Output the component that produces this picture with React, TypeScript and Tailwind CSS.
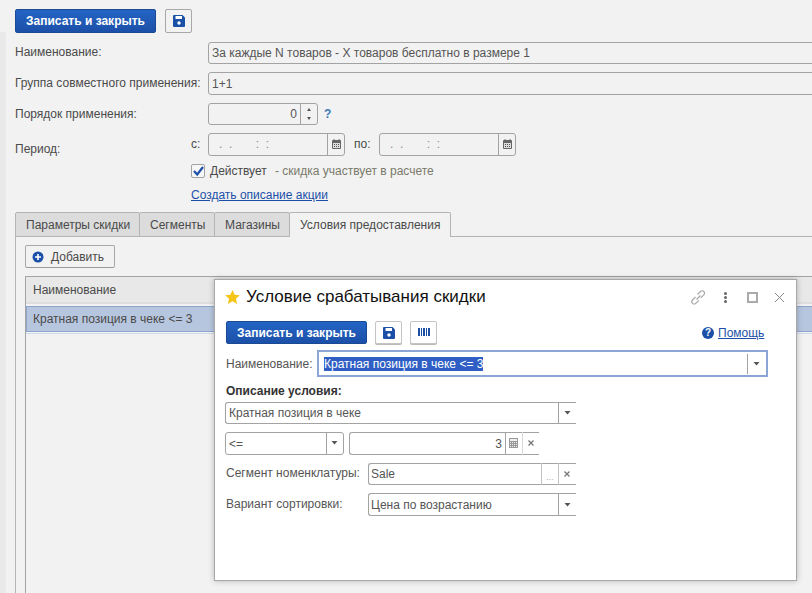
import React from "react";

const Save = ({ x, y }: { x: number; y: number }) => (
  <svg className="absolute" style={{ left: x, top: y }} width="12" height="12" viewBox="0 0 12 12">
    <path d="M1 0h8.5L12 2.5V11a1 1 0 0 1-1 1H1a1 1 0 0 1-1-1V1a1 1 0 0 1 1-1z" fill="#1c50a8" />
    <rect x="2.5" y="1" width="6.5" height="3" fill="#ffffff" />
    <circle cx="6" cy="8" r="1.7" fill="#ffffff" />
  </svg>
);

const Arrow = ({ x, y, c = "#555" }: { x: number; y: number; c?: string }) => (
  <svg className="absolute" style={{ left: x, top: y }} width="7" height="4" viewBox="0 0 7 4">
    <path d="M0.5 0h6L3.5 3.5z" fill={c} />
  </svg>
);

const Cal = ({ x, y }: { x: number; y: number }) => (
  <svg className="absolute" style={{ left: x, top: y }} width="9" height="10" viewBox="0 0 9 10">
    <rect x="0" y="1" width="9" height="9" rx="1" fill="#666" />
    <rect x="1.5" y="0" width="1" height="2" fill="#666" />
    <rect x="6.5" y="0" width="1" height="2" fill="#666" />
    <rect x="1" y="4" width="7" height="5" fill="#ddd" />
    <path d="M2 5h1v1H2zM4 5h1v1H4zM6 5h1v1H6zM2 7h1v1H2zM4 7h1v1H4zM6 7h1v1H6z" fill="#555" />
  </svg>
);

const X = ({ x, y, c = "#777" }: { x: number; y: number; c?: string }) => (
  <svg className="absolute" style={{ left: x, top: y }} width="6" height="6" viewBox="0 0 6 6">
    <path d="M0.5 0.5l5 5M5.5 0.5l-5 5" stroke={c} strokeWidth="1.3" />
  </svg>
);

export default function App() {
  return (
    <div className="relative w-[812px] h-[593px] overflow-hidden bg-[#f2f2f2] text-[12px] leading-[14px] text-[#4a4a4a] [font-family:Liberation_Sans,sans-serif]">
      <div className="absolute left-0 top-[32px] w-[6px] h-[561px] bg-[#e9e9e9]" />

      {/* top toolbar */}
      <div className="absolute left-[15px] top-[9px] w-[141px] h-[24px] rounded-[2px] border border-[#1a4a94] bg-gradient-to-b from-[#2464c4] to-[#1c50a8] text-white font-bold flex items-center justify-center">Записать и закрыть</div>
      <div className="absolute left-[165px] top-[9px] w-[27px] h-[24px] rounded-[2px] border border-[#a8a8a8] bg-[#f2f2f2]" />
      <Save x={173} y={15} />

      {/* form */}
      <div className="absolute left-[15px] top-[45px]">Наименование:</div>
      <div className="absolute left-[208px] top-[42px] w-[620px] h-[22px] rounded-[3px] border border-[#a3a3a3] pl-[3px] pt-[3px] text-[#555]">За каждые N товаров - X товаров бесплатно в размере 1</div>
      <div className="absolute left-[15px] top-[76px]">Группа совместного применения:</div>
      <div className="absolute left-[208px] top-[72px] w-[620px] h-[23px] rounded-[3px] border border-[#a3a3a3] pl-[3px] pt-[4px] text-[#555]">1+1</div>
      <div className="absolute left-[15px] top-[107px]">Порядок применения:</div>
      <div className="absolute left-[208px] top-[103px] w-[110px] h-[22px] rounded-[3px] border border-[#a3a3a3]">
        <div className="absolute right-[20px] top-[3px] text-[#555]">0</div>
        <div className="absolute left-[91px] top-0 w-px h-[20px] bg-[#a3a3a3]" />
      </div>
      <div className="absolute left-[307px] top-[108px] w-0 h-0 border-x-[2px] border-x-transparent border-b-[3px] border-b-[#555]" />
      <div className="absolute left-[307px] top-[117px] w-0 h-0 border-x-[2px] border-x-transparent border-t-[3px] border-t-[#555]" />
      <div className="absolute left-[324px] top-[107px] font-bold text-[#3a7ab8]">?</div>

      <div className="absolute left-[15px] top-[142px]">Период:</div>
      <div className="absolute left-[191px] top-[137px]">с:</div>
      <div className="absolute left-[208px] top-[133px] w-[137px] h-[23px] rounded-[3px] border border-[#a3a3a3]">
        <div className="absolute left-[10px] top-[3px] text-[#8a8a8a] whitespace-pre">{".  .       :  :"}</div>
        <div className="absolute left-[118px] top-0 w-px h-[21px] bg-[#a3a3a3]" />
      </div>
      <Cal x={332} y={139} />
      <div className="absolute left-[354px] top-[137px]">по:</div>
      <div className="absolute left-[379px] top-[133px] w-[137px] h-[23px] rounded-[3px] border border-[#a3a3a3]">
        <div className="absolute left-[10px] top-[3px] text-[#8a8a8a] whitespace-pre">{".  .       :  :"}</div>
        <div className="absolute left-[118px] top-0 w-px h-[21px] bg-[#a3a3a3]" />
      </div>
      <Cal x={503} y={139} />

      <div className="absolute left-[191px] top-[164px] w-[14px] h-[14px] rounded-[2px] border border-[#a3a3a3] bg-[#f7f7f7]" />
      <svg className="absolute left-[192px] top-[165px]" width="13" height="12" viewBox="0 0 13 12">
        <path d="M2 6l3.2 3.5L11 2" fill="none" stroke="#1c50a8" strokeWidth="2.2" />
      </svg>
      <div className="absolute left-[210px] top-[164px]">Действует</div>
      <div className="absolute left-[275px] top-[164px] text-[#7a7a6a]">- скидка участвует в расчете</div>
      <div className="absolute left-[191px] top-[188px] text-[#1c50a8] underline">Создать описание акции</div>

      {/* tabs */}
      <div className="absolute left-[15px] top-[236px] w-[797px] h-px bg-[#b4b4b4]" />
      <div className="absolute left-[15px] top-[236px] w-px h-[357px] bg-[#b4b4b4]" />
      <div className="absolute left-[15px] top-[212px] w-[125px] h-[25px] border border-[#b4b4b4] bg-[#dcdcdc] pl-[10px] pt-[5px] rounded-t-[2px]">Параметры скидки</div>
      <div className="absolute left-[139px] top-[212px] w-[76px] h-[25px] border border-[#b4b4b4] bg-[#dcdcdc] pl-[10px] pt-[5px] rounded-t-[2px]">Сегменты</div>
      <div className="absolute left-[214px] top-[212px] w-[76px] h-[25px] border border-[#b4b4b4] bg-[#dcdcdc] pl-[10px] pt-[5px] rounded-t-[2px]">Магазины</div>
      <div className="absolute left-[289px] top-[212px] w-[162px] h-[25px] border border-[#b4b4b4] border-b-0 bg-[#f2f2f2] pl-[10px] pt-[5px] rounded-t-[2px]">Условия предоставления</div>

      <div className="absolute left-[25px] top-[245px] w-[90px] h-[23px] rounded-[2px] border border-[#a8a8a8] border-b-[#999] bg-[#f2f2f2] pl-[25px] pt-[4px]">Добавить</div>
      <svg className="absolute left-[32px] top-[251px]" width="12" height="12" viewBox="0 0 12 12">
        <circle cx="6" cy="6" r="5.5" fill="#1c50a8" />
        <path d="M6 3v6M3 6h6" stroke="#fff" strokeWidth="1.6" />
      </svg>

      {/* table */}
      <div className="absolute left-[25px] top-[276px] w-[800px] h-[330px] border border-[#a3a3a3]">
        <div className="h-[27px] bg-[#e8e8e8] pl-[7px] pt-[6px] border-b-2 border-b-[#dedede]">Наименование</div>
        <div className="mt-[2px] h-[26px] bg-[#b7c6df] border border-[#8ea6cf] pl-[6px] pt-[5px]">Кратная позиция в чеке &lt;= 3</div>
        <div className="h-px mt-[1px] bg-[#d4dbe8]" />
      </div>

      {/* dialog */}
      <div className="absolute left-[214px] top-[279px] w-[583px] h-[302px] bg-white border border-[#a8a8a8] shadow-[0_0_6px_rgba(0,0,0,0.25)]" />
      <svg className="absolute left-[225px] top-[290px]" width="15" height="14" viewBox="0 0 15 14">
        <path d="M7.5 0l2.2 4.7 5.1.6-3.8 3.5 1 5.1-4.5-2.6L3 13.9l1-5.1L.2 5.3l5.1-.6z" fill="#f5c518" />
      </svg>
      <div className="absolute left-[246px] top-[287px] text-[17px] leading-[20px] text-[#111]">Условие срабатывания скидки</div>

      <svg className="absolute left-[690px] top-[290px]" width="16" height="15" viewBox="0 0 16 15" fill="none" stroke="#a8a8a8" strokeWidth="1.2">
        <path d="M6.5 9.5l4-4" />
        <path d="M5.5 7L2.5 10a2.3 2.3 0 0 0 3.3 3.3l3-3" />
        <path d="M7.5 4.5l3-3a2.3 2.3 0 0 1 3.3 3.3l-3 3" />
      </svg>
      <div className="absolute left-[724px] top-[292px] w-[3px] h-[3px] bg-[#666] rounded-full" />
      <div className="absolute left-[724px] top-[296px] w-[3px] h-[3px] bg-[#666] rounded-full" />
      <div className="absolute left-[724px] top-[300px] w-[3px] h-[3px] bg-[#666] rounded-full" />
      <div className="absolute left-[747px] top-[292px] w-[11px] h-[11px] border-2 border-[#aaa]" />
      <svg className="absolute left-[774px] top-[292px]" width="11" height="11" viewBox="0 0 11 11">
        <path d="M1 1l9 9M10 1l-9 9" stroke="#888" strokeWidth="1" />
      </svg>

      <div className="absolute left-[226px] top-[321px] w-[141px] h-[23px] rounded-[2px] border border-[#1a4a94] bg-gradient-to-b from-[#2464c4] to-[#1c50a8] text-white font-bold flex items-center justify-center">Записать и закрыть</div>
      <div className="absolute left-[375px] top-[321px] w-[27px] h-[23px] rounded-[2px] border border-[#c4c4c4] bg-white shadow-[0_1px_0_#bbb]" />
      <Save x={383} y={327} />
      <div className="absolute left-[410px] top-[321px] w-[27px] h-[23px] rounded-[2px] border border-[#c4c4c4] bg-white shadow-[0_1px_0_#bbb]" />
      <svg className="absolute left-[418px] top-[328px]" width="12" height="8" viewBox="0 0 12 8">
        <path d="M0 0h2v8H0zM3 0h1v8H3zM5 0h2v8H5zM8 0h1v8H8zM10 0h2v8h-2z" fill="#1c50a8" />
      </svg>

      <svg className="absolute left-[702px] top-[327px]" width="12" height="12" viewBox="0 0 12 12">
        <circle cx="6" cy="6" r="6" fill="#1c50a8" />
      </svg>
      <div className="absolute left-[702px] top-[327px] w-[12px] h-[12px] text-center text-[10px] leading-[12px] font-bold text-white">?</div>
      <div className="absolute left-[718px] top-[326px] text-[#1c50a8] underline">Помощь</div>

      <div className="absolute left-[226px] top-[357px] text-[#555]">Наименование:</div>
      <div className="absolute left-[317px] top-[350px] w-[451px] h-[27px] border-2 border-[#8ba6d6] bg-white" />
      <div className="absolute left-[324px] top-[357px] h-[14px] bg-[#2f5fc4] text-white">Кратная позиция в чеке &lt;= 3</div>
      <div className="absolute left-[747px] top-[354px] w-px h-[20px] bg-[#a3a3a3]" />
      <Arrow x={753} y={362} />

      <div className="absolute left-[226px] top-[384px] font-bold text-[#333]">Описание условия:</div>

      <div className="absolute left-[225px] top-[402px] w-[351px] h-[22px] rounded-l-[3px] border border-[#a3a3a3] border-r-0 pl-[3px] pt-[3px] text-[#555]">Кратная позиция в чеке</div>
      <div className="absolute left-[558px] top-[402px] w-px h-[22px] bg-[#a3a3a3]" />
      <Arrow x={564} y={411} />

      <div className="absolute left-[225px] top-[432px] w-[119px] h-[23px] rounded-[3px] border border-[#a3a3a3] pl-[3px] pt-[4px] text-[#555]">&lt;=</div>
      <div className="absolute left-[326px] top-[432px] w-px h-[23px] bg-[#a3a3a3]" />
      <Arrow x={331} y={441} />

      <div className="absolute left-[349px] top-[432px] w-[190px] h-[23px] rounded-l-[3px] border border-[#a3a3a3] border-r-0">
        <div className="absolute right-[37px] top-[4px] text-[#555]">3</div>
      </div>
      <div className="absolute left-[505px] top-[432px] w-px h-[23px] bg-[#a3a3a3]" />
      <div className="absolute left-[522px] top-[432px] w-px h-[23px] bg-[#d8d8d8]" />
      <svg className="absolute left-[509px] top-[438px]" width="9" height="10" viewBox="0 0 9 10">
        <rect width="9" height="10" fill="#999" />
        <path d="M1 1h7v2H1zM1 4h1v1H1zM3 4h1v1H3zM5 4h1v1H5zM7 4h1v1H7zM1 6h1v1H1zM3 6h1v1H3zM5 6h1v1H5zM7 6h1v1H7zM1 8h1v1H1zM3 8h1v1H3zM5 8h1v1H5zM7 8h1v1H7z" fill="#eee" />
      </svg>
      <X x={528} y={440} />

      <div className="absolute left-[226px] top-[466px] text-[#555]">Сегмент номенклатуры:</div>
      <div className="absolute left-[368px] top-[463px] w-[208px] h-[22px] rounded-l-[3px] border border-[#a3a3a3] border-r-0 pl-[2px] pt-[3px] text-[#555]">Sale</div>
      <div className="absolute left-[541px] top-[463px] w-px h-[22px] bg-[#c4c4c4]" />
      <div className="absolute left-[558px] top-[463px] w-px h-[22px] bg-[#c4c4c4]" />
      <div className="absolute left-[546px] top-[472px] text-[9px] leading-[10px] text-[#aaa]">...</div>
      <X x={564} y={471} />

      <div className="absolute left-[226px] top-[497px] text-[#555]">Вариант сортировки:</div>
      <div className="absolute left-[368px] top-[493px] w-[208px] h-[23px] rounded-l-[3px] border border-[#a3a3a3] border-r-0 pl-[2px] pt-[4px] text-[#555]">Цена по возрастанию</div>
      <div className="absolute left-[558px] top-[493px] w-px h-[23px] bg-[#a3a3a3]" />
      <Arrow x={564} y={503} />
    </div>
  );
}
